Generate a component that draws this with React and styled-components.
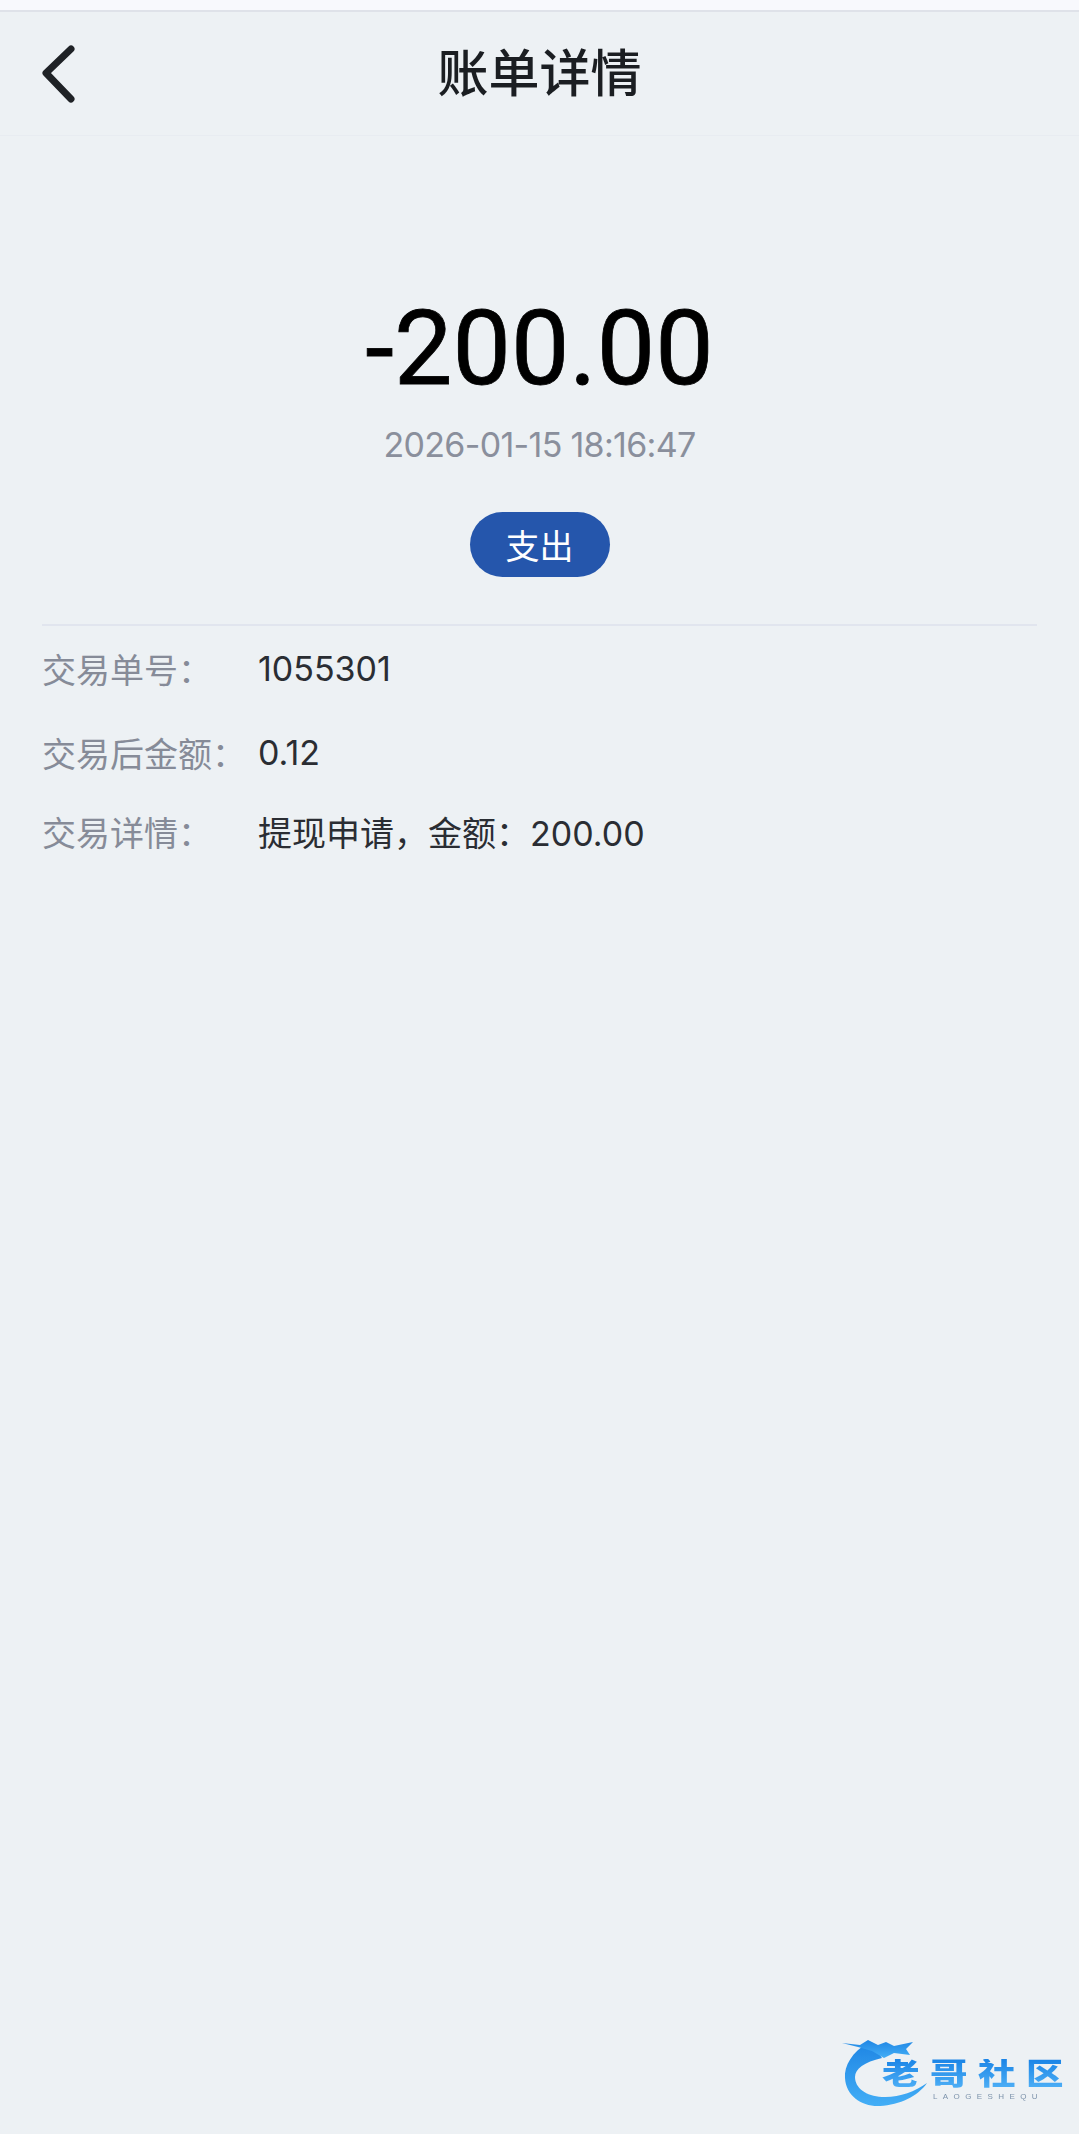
import React from 'react'
import styled, { createGlobalStyle } from 'styled-components'

const GlobalStyle = createGlobalStyle`
  html, body {
    margin: 0;
    padding: 0;
    background: #edf1f4;
  }
`

const FONT = `Inter, "Noto Sans CJK SC", sans-serif`

const Page = styled.div`
  position: relative;
  width: 1079px;
  height: 2134px;
  overflow: hidden;
  background: #edf1f4;
  font-family: ${FONT};
`

const StatusStrip = styled.div`
  height: 10px;
  background: #f8f9fd;
  border-bottom: 2px solid #dfe2e9;
`

const Header = styled.header`
  position: relative;
  display: flex;
  align-items: center;
  justify-content: center;
  box-sizing: border-box;
  height: 124px;
  padding-bottom: 8px;
  border-bottom: 1px solid #e8ecf1;
`

const BackButton = styled.button`
  position: absolute;
  left: 38px;
  top: 27px;
  display: flex;
  padding: 0;
  border: 0;
  background: none;
`

const Title = styled.h1`
  margin: 0;
  font-size: 51px;
  font-weight: 500;
  color: #1b1e22;
`

const Summary = styled.section`
  display: flex;
  flex-direction: column;
  align-items: center;
  padding-top: 155px;
`

const Amount = styled.div`
  font-family: Roboto, sans-serif;
  font-size: 104px;
  font-weight: 400;
  line-height: 116px;
  -webkit-text-stroke: 0.8px #000;
  color: #000;
`

const DateText = styled.div`
  margin-top: 17px;
  font-size: 34px;
  line-height: 42px;
  letter-spacing: -0.7px;
  color: #8a8f9c;
`

const Pill = styled.div`
  display: flex;
  align-items: center;
  justify-content: center;
  width: 140px;
  height: 65px;
  margin-top: 46px;
  border-radius: 33px;
  background: #2556ac;
  font-size: 34px;
  color: #fff;
`

const Details = styled.section`
  margin: 47px 42px 0;
  padding-top: 15px;
  border-top: 2px solid #e1e5ee;
`

const Row = styled.div`
  display: flex;
  align-items: center;
  height: 54px;
  margin-bottom: ${({ $gap }) => $gap}px;
  font-size: 34px;
`

const Label = styled.span`
  width: 216px;
  flex-shrink: 0;
  color: #868b98;
`

const Value = styled.span`
  color: #2a2d33;
`

const Watermark = styled.div`
  position: absolute;
  left: 838px;
  top: 2036px;
  width: 226px;
  height: 72px;
  filter: blur(0.6px);
`

const WatermarkTitle = styled.div`
  position: absolute;
  left: 44px;
  top: 23px;
  font-family: "Liberation Sans", "Noto Sans CJK SC", sans-serif;
  font-size: 30px;
  font-weight: 900;
  line-height: 30px;
  letter-spacing: 8.4px;
  white-space: nowrap;
  transform: scaleX(1.25);
  transform-origin: left center;
  background: linear-gradient(180deg, #1a84e6, #4fb0f6);
  -webkit-background-clip: text;
  background-clip: text;
  color: transparent;
`

const WatermarkSub = styled.div`
  position: absolute;
  left: 95px;
  top: 56px;
  font-family: "Liberation Sans", sans-serif;
  font-size: 8px;
  line-height: 10px;
  letter-spacing: 5.4px;
  white-space: nowrap;
  color: #7d93ab;
`

const rows = [
  { label: '交易单号：', value: '1055301', gap: 30 },
  { label: '交易后金额：', value: '0.12', gap: 25 },
  { label: '交易详情：', value: '提现申请，金额：200.00', gap: 0 },
]

const App = () => {
  return (
    <>
      <GlobalStyle />
      <Page>
        <StatusStrip />
        <Header>
          <BackButton aria-label="返回">
            <svg width="40" height="64" viewBox="0 0 40 64" fill="none">
              <path
                d="M33 10 L8 34 L33 60"
                stroke="#1f2226"
                strokeWidth="7"
                strokeLinecap="round"
                strokeLinejoin="round"
              />
            </svg>
          </BackButton>
          <Title>账单详情</Title>
        </Header>
        <Summary>
          <Amount>-200.00</Amount>
          <DateText>2026-01-15 18:16:47</DateText>
          <Pill>支出</Pill>
        </Summary>
        <Details>
          {rows.map((row) => (
            <Row key={row.label} $gap={row.gap}>
              <Label>{row.label}</Label>
              <Value>{row.value}</Value>
            </Row>
          ))}
        </Details>
        <Watermark>
          <svg width="100" height="72" viewBox="0 0 100 72" fill="none">
            <defs>
              <linearGradient id="dragonFill" x1="0" y1="0" x2="0" y2="1">
                <stop offset="0" stopColor="#1f86e4" />
                <stop offset="1" stopColor="#43aef6" />
              </linearGradient>
            </defs>
            <path
              d="M30 7 C14 16 6 30 7 42 C8 60 24 71 42 70 C62 69 80 60 89 47 C76 56 60 62 44 61 C28 60 17 52 17 41 C17 33 26 26 44 22 C42 18 36 12 30 7 Z"
              fill="url(#dragonFill)"
            />
            <path
              d="M4 7 L22 9 L30 4 L40 9 L48 6 L56 10 L75 6 L68 13 L72 19 L56 17 L46 22 L34 15 L20 11 Z"
              fill="url(#dragonFill)"
            />
          </svg>
          <WatermarkTitle>老哥社区</WatermarkTitle>
          <WatermarkSub>LAOGESHEQU</WatermarkSub>
        </Watermark>
      </Page>
    </>
  )
}

export default App
